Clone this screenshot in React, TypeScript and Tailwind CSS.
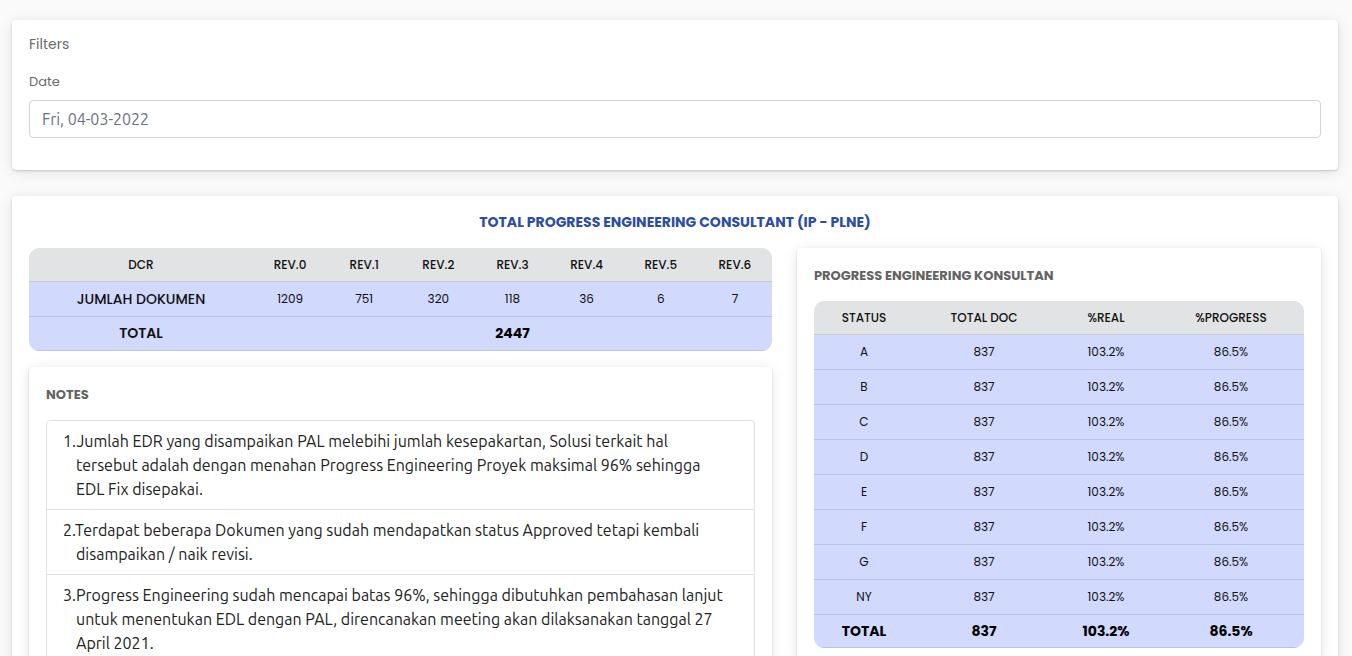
import React from 'react'

const heading = { fontFamily: '"Poppins", "Inter", "Noto Sans", sans-serif' }
const body = { fontFamily: '"Ubuntu", "Noto Sans", "Open Sans", sans-serif' }

const revs = [
  { label: 'REV.0', value: 1209 },
  { label: 'REV.1', value: 751 },
  { label: 'REV.2', value: 320 },
  { label: 'REV.3', value: 118 },
  { label: 'REV.4', value: 36 },
  { label: 'REV.5', value: 6 },
  { label: 'REV.6', value: 7 },
]

const statuses = ['A', 'B', 'C', 'D', 'E', 'F', 'G', 'NY']

const notes = [
  'Jumlah EDR yang disampaikan PAL melebihi jumlah kesepakartan, Solusi terkait hal tersebut adalah dengan menahan Progress Engineering Proyek maksimal 96% sehingga EDL Fix disepakai.',
  'Terdapat beberapa Dokumen yang sudah mendapatkan status Approved tetapi kembali disampaikan / naik revisi.',
  'Progress Engineering sudah mencapai batas 96%, sehingga dibutuhkan pembahasan lanjut untuk menentukan EDL dengan PAL, direncanakan meeting akan dilaksanakan tanggal 27 April 2021.',
]

const card =
  'bg-white rounded-[4px] shadow-[0_2px_14px_rgba(0,0,0,0.10),0_1px_2px_rgba(0,0,0,0.18)]'

// DCR summary table
function DcrTable() {
  return (
    <div className="rounded-[10px] overflow-hidden text-[#111]" style={heading}>
      <div className="flex h-[34px] items-center bg-[#e2e3e5] border-b border-[#c9cacd] text-[12px] font-medium">
        <div className="w-[224px] text-center">DCR</div>
        {revs.map((r) => (
          <div key={r.label} className="flex-1 text-center">
            {r.label}
          </div>
        ))}
      </div>
      <div className="flex h-[35px] items-center bg-[#d1d9fd] border-b border-[#b9c2ee]">
        <div className="w-[224px] text-center text-[14px] font-medium">JUMLAH DOKUMEN</div>
        {revs.map((r) => (
          <div key={r.label} className="flex-1 text-center text-[12px]">
            {r.value}
          </div>
        ))}
      </div>
      <div className="flex h-[34px] items-center bg-[#d1d9fd] border-b border-[#b9c2ee]">
        <div className="w-[224px] text-center text-[14px] font-semibold">TOTAL</div>
        <div className="flex-1 text-center text-[14px] font-bold text-black">2447</div>
      </div>
    </div>
  )
}

function NotesCard() {
  return (
    <div className={`${card} px-[17px] pt-[17px] pb-4`}>
      <div className="text-[13px] font-bold text-[#636363] leading-5 mt-px" style={heading}>
        NOTES
      </div>
      <ol className="mt-[15px] border border-[#dee2e6] rounded-[4px] text-[16px] leading-6 text-[#222]" style={body}>
        {notes.map((n, i) => (
          <li
            key={i}
            className="border-b border-[#dee2e6] last:border-b-0 py-2 pl-[29px] pr-6 -indent-[13px]"
          >
            {i + 1}.{n}
          </li>
        ))}
      </ol>
    </div>
  )
}

function ProgressCard() {
  const cols = ['w-[100px]', 'w-[140px]', 'w-[104px]', 'w-[146px]']
  return (
    <div className={`${card} px-[17px] pt-[18px] pb-4`}>
      <div className="text-[13px] font-bold text-[#636363] leading-5" style={heading}>
        PROGRESS ENGINEERING KONSULTAN
      </div>
      <div className="mt-[15px] rounded-[10px] overflow-hidden text-[#111]" style={heading}>
        <div className="flex h-[34px] items-center bg-[#e2e3e5] border-b border-[#c9cacd] text-[12px] font-medium">
          <div className={`${cols[0]} text-center`}>STATUS</div>
          <div className={`${cols[1]} text-center`}>TOTAL DOC</div>
          <div className={`${cols[2]} text-center`}>%REAL</div>
          <div className={`${cols[3]} text-center`}>%PROGRESS</div>
        </div>
        {statuses.map((s) => (
          <div key={s} className="flex h-[35px] items-center bg-[#d1d9fd] border-b border-[#b9c2ee] text-[12px]">
            <div className={`${cols[0]} text-center`}>{s}</div>
            <div className={`${cols[1]} text-center`}>837</div>
            <div className={`${cols[2]} text-center`}>103.2%</div>
            <div className={`${cols[3]} text-center`}>86.5%</div>
          </div>
        ))}
        <div className="flex h-[33px] items-center bg-[#d1d9fd] border-b border-[#b9c2ee] text-black font-bold">
          <div className={`${cols[0]} text-center text-[14px]`}>TOTAL</div>
          <div className={`${cols[1]} text-center text-[14px]`}>837</div>
          <div className={`${cols[2]} text-center text-[14px]`}>103.2%</div>
          <div className={`${cols[3]} text-center text-[14px]`}>86.5%</div>
        </div>
      </div>
    </div>
  )
}

export default function App() {
  return (
    <div className="min-h-screen bg-[#fafafa] pl-3 pr-[14px] pt-5 pb-8 flex flex-col gap-[26px]">
      {/* Filters */}
      <div className={`${card} h-[150px] px-[17px] pt-[14px]`}>
        <div className="text-[14px] leading-[21px] text-[#6b6b6b]" style={heading}>
          Filters
        </div>
        <div className="mt-[17px] text-[13px] leading-5 text-[#6b6b6b]" style={heading}>
          Date
        </div>
        <div
          className="mt-[8px] h-[38px] border border-[#ced4da] rounded-[4px] flex items-center px-[12px] text-[16px] text-[#6c6f80]"
          style={body}
        >
          Fri, 04-03-2022
        </div>
      </div>

      {/* Total progress */}
      <div className={`${card} px-[17px] pt-4 pb-6`}>
        <div className="text-center text-[14px] leading-[21px] font-bold text-[#2c4da3]" style={heading}>
          TOTAL PROGRESS ENGINEERING CONSULTANT (IP - PLNE)
        </div>
        <div className="mt-[15px] flex gap-[25px] items-start">
          <div className="w-[744px] flex flex-col gap-4">
            <DcrTable />
            <NotesCard />
          </div>
          <div className="flex-1">
            <ProgressCard />
          </div>
        </div>
      </div>
    </div>
  )
}
